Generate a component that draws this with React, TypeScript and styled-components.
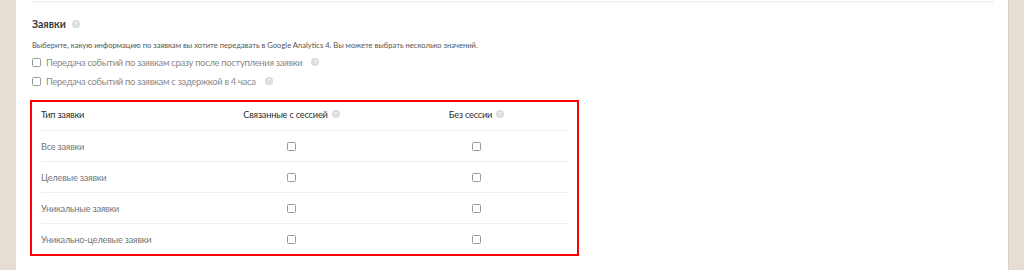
import React from "react";
import styled, { createGlobalStyle } from "styled-components";

const Global = createGlobalStyle`
  html, body { margin: 0; padding: 0; background: #fff; }
  body { font-family: Lato, "Open Sans", "Liberation Sans", sans-serif; }
  * { box-sizing: border-box; }
`;

const Page = styled.div`
  display: flex;
  width: 1024px;
  height: 270px;
  overflow: hidden;
`;

const SideBar = styled.div<{ $edge?: boolean }>`
  width: 16px;
  flex: none;
  background: #e6ddd5;
  border-left: ${(p) => (p.$edge ? "1px solid #d9d0c8" : "none")};
`;

const Main = styled.div`
  flex: 1;
  background: #fff;
  padding: 1px 14px 0 16px;
`;

const Divider = styled.div`
  height: 2px;
  background: #f3f3f3;
`;

const Title = styled.div`
  display: flex;
  align-items: center;
  gap: 6px;
  margin-top: 13px;
  height: 16px;
  font-size: 10.5px;
  font-weight: 700;
  color: #3a3a3a;
`;

const Desc = styled.div`
  margin-top: 8px;
  font-size: 7.6px;
  line-height: 10px;
  color: #555;
`;

const OptionRow = styled.label<{ $gap: number }>`
  display: flex;
  align-items: center;
  gap: 5px;
  margin-top: ${(p) => p.$gap}px;
  height: 12px;
  font-size: 9.4px;
  letter-spacing: -0.3px;
  color: #8a8a8a;
`;

const Box = styled.span`
  width: 9px;
  height: 9px;
  border: 1px solid #9a9a9a;
  border-radius: 1.5px;
  background: #fff;
  flex: none;
  display: inline-block;
`;

const Help = styled.span`
  display: inline-flex;
  align-items: center;
  justify-content: center;
  width: 8px;
  height: 8px;
  border-radius: 50%;
  background: #dcdcdc;
  color: #fff;
  font-size: 6px;
  font-weight: 700;
  letter-spacing: 0;
  line-height: 1;
  margin-left: 4px;
  flex: none;
`;

const Frame = styled.div`
  margin-top: 13px;
  margin-left: -2px;
  width: 549px;
  border: 2px solid #ff0000;
  padding: 0 9px;
`;

const Grid = styled.div<{ $head?: boolean }>`
  display: grid;
  grid-template-columns: 158px 185px 185px;
  align-items: center;
  font-size: 9.2px;
  letter-spacing: -0.2px;
  ${(p) =>
    p.$head
      ? `padding: 6px 0 10px; height: 28px; color: #2e2e2e;`
      : `height: 31px; border-top: 1px solid #efefef; color: #777;`}
`;

const Cell = styled.div<{ $center?: boolean }>`
  display: flex;
  align-items: center;
  justify-content: ${(p) => (p.$center ? "center" : "flex-start")};
  white-space: nowrap;
`;

const rows = ["Все заявки", "Целевые заявки", "Уникальные заявки", "Уникально-целевые заявки"];

export default function App() {
  return (
    <Page>
      <Global />
      <SideBar />
      <Main>
        <Divider />
        <Title>
          Заявки <Help style={{ marginLeft: 0 }}>?</Help>
        </Title>
        <Desc>
          Выберите, какую информацию по заявкам вы хотите передавать в Google Analytics 4. Вы можете выбрать
          несколько значений.
        </Desc>
        <OptionRow $gap={6}>
          <Box />
          Передача событий по заявкам сразу после поступления заявки
          <Help>?</Help>
        </OptionRow>
        <OptionRow $gap={7}>
          <Box />
          Передача событий по заявкам с задержкой в 4 часа
          <Help>?</Help>
        </OptionRow>
        <Frame>
          <Grid $head>
            <Cell>Тип заявки</Cell>
            <Cell $center>
              Связанные с сессией <Help>?</Help>
            </Cell>
            <Cell $center>
              Без сессии <Help>?</Help>
            </Cell>
          </Grid>
          {rows.map((r) => (
            <Grid key={r}>
              <Cell>{r}</Cell>
              <Cell $center>
                <Box />
              </Cell>
              <Cell $center>
                <Box />
              </Cell>
            </Grid>
          ))}
        </Frame>
      </Main>
      <SideBar $edge />
    </Page>
  );
}
